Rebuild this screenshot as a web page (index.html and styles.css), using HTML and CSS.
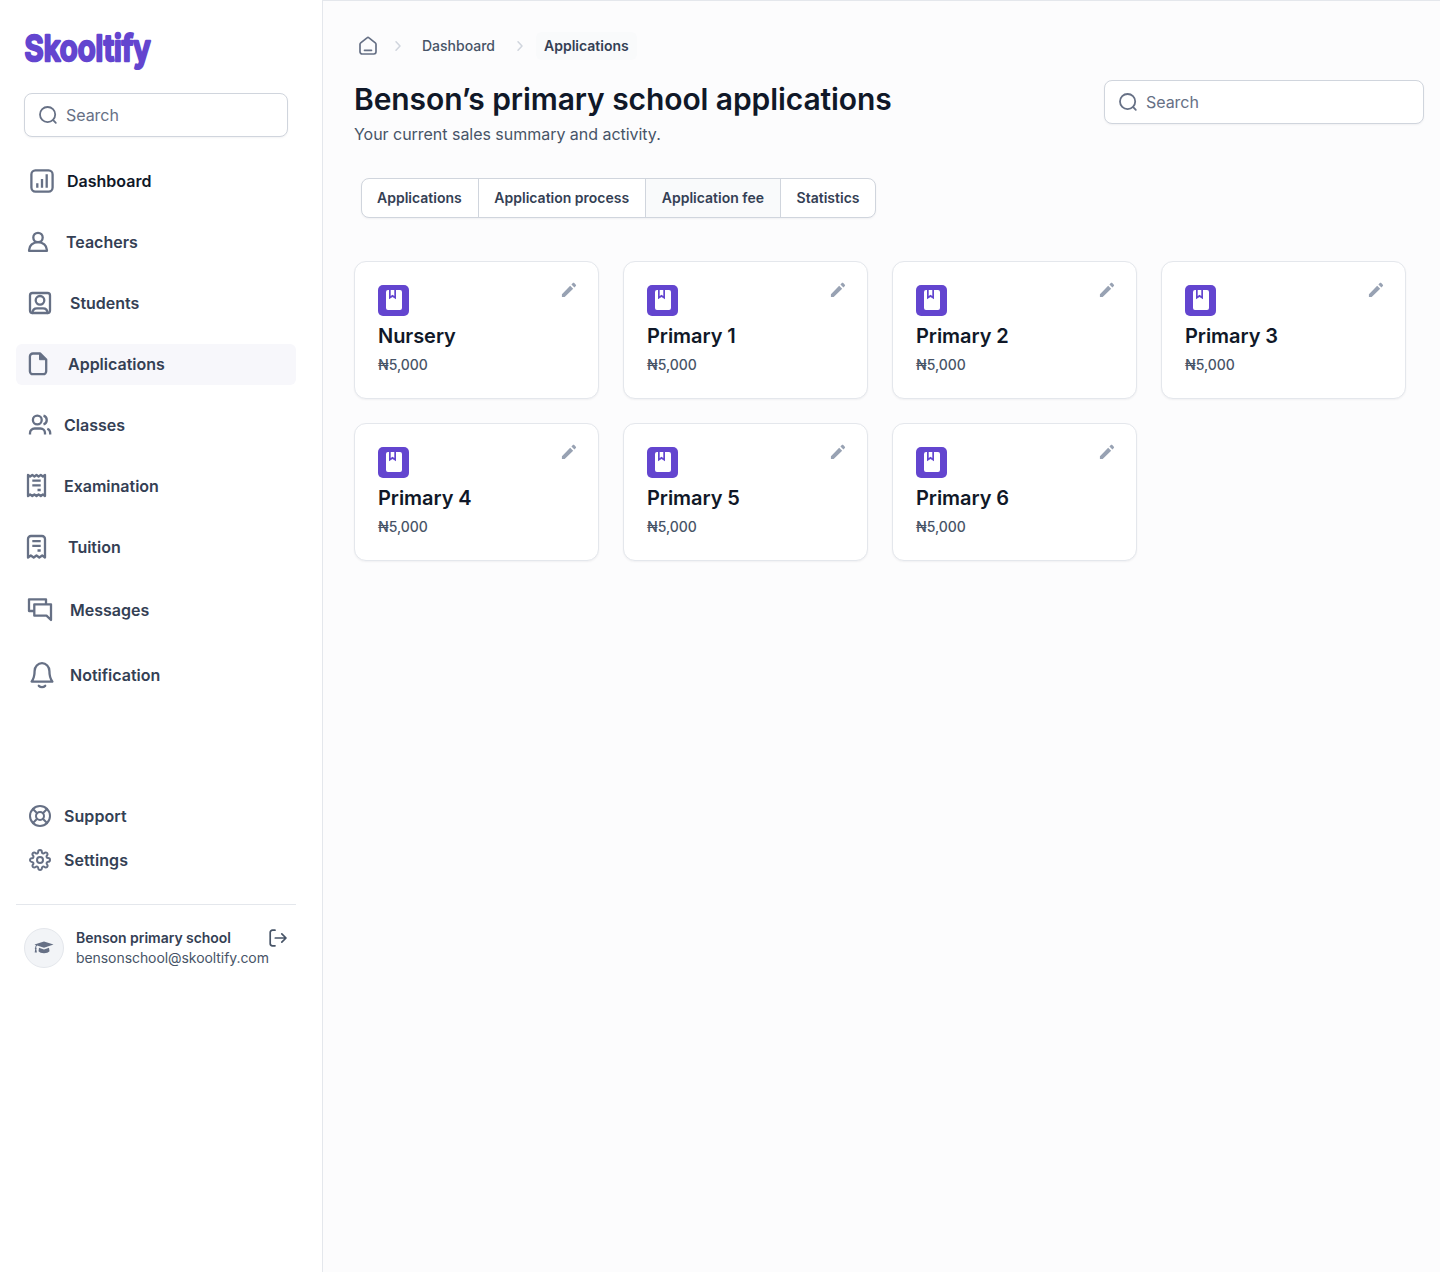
FILE: index.html
```html
<!DOCTYPE html>
<html lang="en">
<head>
<meta charset="utf-8">
<title>Skooltify – Applications</title>
<link rel="stylesheet" href="styles.css">
</head>
<body>
<svg class="defs" aria-hidden="true">
  <symbol id="i-search" viewBox="0 0 20 20"><g fill="none" stroke="currentColor" stroke-width="1.8" stroke-linecap="round"><circle cx="9.6" cy="9.6" r="7.6"/><path d="M15.2 15.2l2.600 2.600"/></g></symbol>
  <symbol id="i-chevron" viewBox="0 0 16 16"><path d="M6 3.800L10 8l-4 4.200" fill="none" stroke="currentColor" stroke-width="1.500" stroke-linecap="round" stroke-linejoin="round"/></symbol>
  <symbol id="i-book" viewBox="0 0 31 31"><path fill="#fff" d="M10 5h1v9.200l3.500-2.300 3.500 2.300V5h4a2 2 0 0 1 2 2v16a2 2 0 0 1-2 2H10a2 2 0 0 1-2-2V7a2 2 0 0 1 2-2z"/><path fill="#fff" d="M12.700 5h3.600v6l-1.800-1.300-1.800 1.300z"/></symbol>
  <symbol id="i-pencil" viewBox="0 0 24 24"><path fill="currentColor" d="M3.500 17.200v3.300h3.300L17 10.600 13.400 7zM20.200 7.300c.5-.5.5-1.200 0-1.700l-1.900-1.900c-.5-.5-1.200-.5-1.700 0l-1.700 1.700 3.600 3.600z"/></symbol>
</svg>
<div class="app">
  <aside class="sidebar">
    <svg class="logo" width="140" height="44" viewBox="0 0 140 44"><text x="0.500" y="34" textLength="126" lengthAdjust="spacingAndGlyphs">Skooltify</text></svg>
    <div class="search"><svg width="20" height="20"><use href="#i-search"/></svg><span>Search</span></div>
    <nav class="nav">
      <a class="link gap-11 dark"><svg class="icon" viewBox="0 0 32 32"><rect x="7.400" y="5.400" width="21.200" height="21.200" rx="4"/><path d="M13.300 22.700v-4.400M18 22.700V14M22.700 22.700V9.300"/></svg><span>Dashboard</span></a>
      <a class="link gap-10"><svg class="icon" viewBox="0 0 32 32"><circle cx="14" cy="11.500" r="4.700"/><path d="M5.100 24.900V24a8.900 7.800 0 0 1 17.800 0v.9z"/></svg><span>Teachers</span></a>
      <a class="link gap-14"><svg class="icon thin" viewBox="0 0 32 32"><rect x="6" y="6" width="20" height="20" rx="2.500"/><circle cx="16" cy="13.300" r="4.300"/><path d="M8.500 26c0-3 1.800-4.700 4.500-4.700h6c2.700 0 4.500 1.700 4.500 4.700"/></svg><span>Students</span></a>
      <a class="link gap-12 active"><svg class="icon" viewBox="0 0 32 32"><path d="M8.900 5.500h7.300l6 6v11.700a3 3 0 0 1-3 3H8.900a3 3 0 0 1-3-3V8.500a3 3 0 0 1 3-3z"/><path class="solid" d="M15.500 5.500v6.200h6.500z"/></svg><span>Applications</span></a>
      <a class="link gap-8"><svg class="icon" viewBox="0 0 32 32"><circle cx="13.300" cy="11" r="4.400"/><path d="M6 25.500V24a4.500 4.500 0 0 1 4.500-4.500h6A4.500 4.500 0 0 1 21 24v1.500M19.500 6.600a4.600 4.600 0 0 1 0 8.800M23.300 19.700c1.800.7 2.900 2.300 2.900 4.300v1.500"/></svg><span>Classes</span></a>
      <a class="link gap-8"><svg class="icon" viewBox="0 0 32 32"><path d="M4 5l2.100 1.500L8.300 5l2.100 1.500L12.500 5l2.100 1.500L16.800 5l2.100 1.500L21 5v21l-2.100-1.500L16.800 26l-2.200-1.500-2.100 1.500-2.100-1.500L8.300 26l-2.200-1.500L4 26zM8.300 10.700h8.400M8.300 15.300h8.400M13.500 20h3.200"/></svg><span>Examination</span></a>
      <a class="link gap-12"><svg class="icon" viewBox="0 0 32 32"><path d="M4 26.500V8a3 3 0 0 1 3-3h11a3 3 0 0 1 3 3v18.500l-2.800-2-2.900 2-2.800-2-2.800 2-2.900-2zM8.300 10.200h8.400M8.300 14.800h8.400M13.500 19.500h3.200"/></svg><span>Tuition</span></a>
      <a class="link gap-14 tall"><svg class="icon thin" viewBox="0 0 32 32"><path d="M9.500 17H5V5.300h17V10M10.300 10.300H27V26l-4.500-4.300H10.300z"/></svg><span>Messages</span></a>
      <a class="link gap-14 tall"><svg class="icon thin" viewBox="0 0 32 32"><path d="M7.600 22.600c2-2.600 3-4.600 3-10.600a7.400 7.800 0 0 1 14.800 0c0 6 1 8 3 10.600zM14.800 26.800c1.800 1.700 4.600 1.700 6.400 0"/></svg><span>Notification</span></a>
    </nav>
    <nav class="nav nav-foot">
      <a class="link gap-8"><svg class="icon fine" viewBox="-4 -4 32 32"><circle cx="12" cy="12" r="10"/><circle cx="12" cy="12" r="4"/><path d="M4.930 4.930l4.240 4.240M14.830 14.830l4.240 4.240M14.830 9.170l4.240-4.240M4.930 19.070l4.240-4.240"/></svg><span>Support</span></a>
      <a class="link gap-8"><svg class="icon fine" viewBox="-4 -4 32 32"><circle cx="12" cy="12" r="3"/><path d="M18.727 14.727a1.500 1.500 0 0 0 .3 1.655l.055.054a1.818 1.818 0 1 1-2.573 2.573l-.054-.055a1.510 1.510 0 0 0-2.564 1.073v.155a1.818 1.818 0 1 1-3.636 0V20.100a1.500 1.500 0 0 0-2.636-1.073l-.055.055a1.818 1.818 0 1 1-2.573-2.573l.055-.055a1.510 1.510 0 0 0-1.073-2.563h-.155a1.818 1.818 0 1 1 0-3.636H3.900a1.500 1.500 0 0 0 1.073-2.637l-.055-.054a1.818 1.818 0 1 1 2.573-2.573l.055.054a1.500 1.500 0 0 0 2.636-1V3.818a1.818 1.818 0 0 1 3.636 0V3.900a1.500 1.500 0 0 0 2.564 1.073l.054-.055a1.818 1.818 0 1 1 2.573 2.573l-.055.055a1.500 1.500 0 0 0 1.073 2.563h.155a1.818 1.818 0 0 1 0 3.636H20.100a1.500 1.500 0 0 0-1.373.982z"/></svg><span>Settings</span></a>
    </nav>
    <div class="account">
      <div class="avatar"><svg width="20" height="16" viewBox="0 0 20 16"><path fill="currentColor" d="M10 1.500l9.500 3-9.500 3.200-6.800-2.200c-.7.500-1 1.100-1 2 .7.500.6 1.200.1 1.600l.6 3.400H.7l.5-3.400c-.5-.5-.5-1.200.1-1.600 0-.9.200-1.600.7-2.300L.5 4.500z"/><path fill="currentColor" d="M5 7.800l5 1.600 5-1.600.5 3.500c-1 1.300-3 2-5.500 2s-4.500-.7-5.500-2z"/></svg></div>
      <div class="who"><strong>Benson primary school</strong><span>bensonschool@skooltify.com</span></div>
      <svg class="logout" width="20" height="20" viewBox="0 0 20 20"><path d="M7 2.200H4.500a2.300 2.300 0 0 0-2.300 2.300v11a2.300 2.300 0 0 0 2.300 2.300H7M7.300 10h10.500M13.800 5.800L18 10l-4.200 4.200" fill="none" stroke="currentColor" stroke-width="1.700" stroke-linecap="round" stroke-linejoin="round"/></svg>
    </div>
  </aside>
  <main class="main">
    <div class="crumbs">
      <svg class="home" width="20" height="20" viewBox="0 0 20 20"><path d="M2 8.200c0-.6.200-1 .7-1.400L9 1.900c.6-.5 1.400-.5 2 0l6.300 4.900c.5.400.7.800.7 1.400v7.600a2.200 2.200 0 0 1-2.200 2.200H4.200A2.200 2.200 0 0 1 2 15.800zM6.500 14.300h7" fill="none" stroke="currentColor" stroke-width="1.700" stroke-linecap="round" stroke-linejoin="round"/></svg>
      <svg class="sep first" width="16" height="16"><use href="#i-chevron"/></svg>
      <span class="crumb">Dashboard</span>
      <svg class="sep" width="16" height="16"><use href="#i-chevron"/></svg>
      <span class="crumb current">Applications</span>
    </div>
    <header class="header">
      <div><h1>Benson’s primary school applications</h1><p>Your current sales summary and activity.</p></div>
      <div class="search wide"><svg width="20" height="20"><use href="#i-search"/></svg><span>Search</span></div>
    </header>
    <div class="tabs"><span>Applications</span><span>Application process</span><span class="on">Application fee</span><span>Statistics</span></div>
    <section class="cards">
      <article class="card"><svg class="book"><use href="#i-book"/></svg><svg class="pencil"><use href="#i-pencil"/></svg><h2>Nursery</h2><p>₦5,000</p></article>
      <article class="card"><svg class="book"><use href="#i-book"/></svg><svg class="pencil"><use href="#i-pencil"/></svg><h2>Primary 1</h2><p>₦5,000</p></article>
      <article class="card"><svg class="book"><use href="#i-book"/></svg><svg class="pencil"><use href="#i-pencil"/></svg><h2>Primary 2</h2><p>₦5,000</p></article>
      <article class="card"><svg class="book"><use href="#i-book"/></svg><svg class="pencil"><use href="#i-pencil"/></svg><h2>Primary 3</h2><p>₦5,000</p></article>
      <article class="card"><svg class="book"><use href="#i-book"/></svg><svg class="pencil"><use href="#i-pencil"/></svg><h2>Primary 4</h2><p>₦5,000</p></article>
      <article class="card"><svg class="book"><use href="#i-book"/></svg><svg class="pencil"><use href="#i-pencil"/></svg><h2>Primary 5</h2><p>₦5,000</p></article>
      <article class="card"><svg class="book"><use href="#i-book"/></svg><svg class="pencil"><use href="#i-pencil"/></svg><h2>Primary 6</h2><p>₦5,000</p></article>
    </section>
  </main>
</div>
</body>
</html>
```
FILE: styles.css
```css
* { box-sizing: border-box; }
body { margin: 0; font-family: Inter, "Liberation Sans", sans-serif; color: #344054; background: #fff; }
h1, h2, p { margin: 0; }
svg { display: block; flex: none; }
.defs { display: none; }
.app { display: flex; min-height: 1272px; }

.sidebar { width: 323px; flex: none; border-right: 1px solid #e4e7ec; padding: 27px 26px 0 16px; }
.logo { margin-left: 8px; overflow: visible; }
.logo text { font-weight: 600; font-size: 36px; fill: #6345cf; stroke: #6345cf; stroke-width: 2.6; stroke-linejoin: round; }
.search { display: flex; align-items: center; gap: 8px; width: 264px; height: 44px; margin: 22px 0 0 8px; padding: 0 13px; border: 1px solid #d0d5dd; border-radius: 8px; background: #fff; box-shadow: 0 1px 2px rgba(16, 24, 40, .05); font-size: 16px; line-height: 24px; letter-spacing: -.05px; color: #667085; }

.nav { display: flex; flex-direction: column; gap: 20px; margin-top: 24px; }
.link { display: flex; align-items: flex-start; height: 41px; padding: 4px 8px; border-radius: 6px; font-size: 16px; line-height: 32px; font-weight: 600; }
.link.tall { height: 45px; padding-top: 6px; }
.link.active { background: #f7f7fb; }
.link.dark { color: #101828; }
.gap-8 { gap: 8px; }
.gap-10 { gap: 10px; }
.gap-11 { gap: 11px; }
.gap-12 { gap: 12px; }
.gap-14 { gap: 14px; }
.icon { width: 32px; height: 32px; fill: none; stroke: #667085; stroke-width: 2.3; stroke-linejoin: round; }
.icon.thin { stroke-width: 2.3; stroke-linecap: round; }
.icon.fine { stroke-width: 2; stroke-linecap: round; }
.icon .solid { fill: #667085; stroke-width: 1; }
.nav-foot { gap: 4px; margin-top: 98px; }
.nav-foot .link { height: 40px; letter-spacing: .08px; }

.account { display: flex; margin-top: 24px; width: 280px; border-top: 1px solid #e4e7ec; padding: 23px 8px 0; }
.avatar { display: flex; align-items: center; justify-content: center; width: 40px; height: 40px; border: 1px solid #e4e7ec; border-radius: 50%; background: #f2f4f7; color: #667085; }
.who { display: flex; flex-direction: column; width: 192px; margin-left: 12px; font-size: 14px; line-height: 20px; white-space: nowrap; }
.who strong { font-weight: 600; letter-spacing: -.04px; }
.who span { color: #475467; letter-spacing: -.07px; }
.logout { color: #475467; }

.main { flex: 1; min-width: 0; border-top: 1px solid #e4e7ec; background: #fcfcfd; padding: 31px 16px 0 31px; }
.crumbs { display: flex; align-items: center; height: 28px; padding-left: 4px; font-size: 14px; line-height: 20px; font-weight: 500; color: #475467; }
.home { color: #667085; }
.sep { margin: 0 8px 0 9px; color: #d0d5dd; }
.sep.first { margin-left: 12px; }
.crumb { padding: 4px 8px; border-radius: 6px; }
.current { font-weight: 600; color: #344054; background: #f9fafb; }
.header { display: flex; justify-content: space-between; margin-top: 20px; }
h1 { font-size: 30px; line-height: 38px; font-weight: 600; letter-spacing: -.085px; color: #101828; }
.header p { margin-top: 4px; font-size: 16px; line-height: 24px; letter-spacing: -.03px; color: #475467; }
.search.wide { width: 320px; margin: 0; }
.tabs { display: flex; width: 515px; height: 40px; margin: 32px 0 0 7px; border: 1px solid #d0d5dd; border-radius: 8px; overflow: hidden; background: #fff; box-shadow: 0 1px 2px rgba(16, 24, 40, .05); font-size: 14px; line-height: 38px; font-weight: 600; white-space: nowrap; }
.tabs span { padding: 0 15.8px; border-right: 1px solid #d0d5dd; }
.tabs span:first-child { padding-left: 15px; }
.tabs span:last-child { flex: 1; padding-right: 0; border-right: 0; }
.tabs .on { background: #f9fafb; }

.cards { display: grid; grid-template-columns: repeat(4, 245px); gap: 24px; margin-top: 43px; }
.card { display: grid; grid-template-columns: 1fr 20px; align-content: start; height: 138px; padding: 23px 19px 0 23px; border: 1px solid #e4e7ec; border-radius: 12px; background: #fff; box-shadow: 0 1px 2px rgba(16, 24, 40, .05); }
.book { width: 31px; height: 31px; border-radius: 5px; background: #6345cf; }
.pencil { width: 20px; height: 20px; margin-top: -5px; color: #98a2b3; }
.card h2, .card p { grid-column: 1 / -1; }
.card h2 { margin-top: 5px; font-size: 20px; line-height: 30px; font-weight: 600; letter-spacing: -.06px; color: #101828; }
.card p { margin-top: 4px; font-size: 14px; line-height: 20px; font-weight: 500; letter-spacing: -.05px; color: #475467; }
```
